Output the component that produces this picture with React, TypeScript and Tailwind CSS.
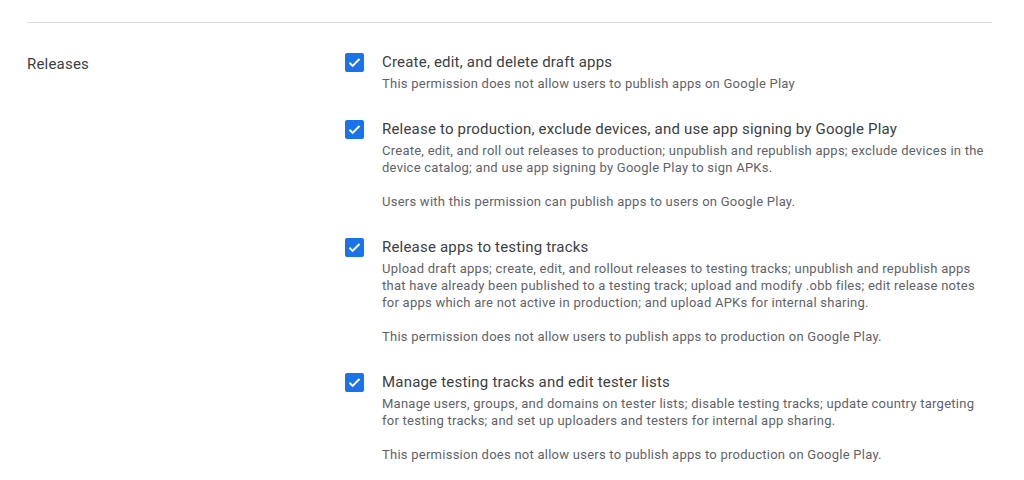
import React from "react";

const items: { title: string; paras: string[] }[] = [
  {
    title: "Create, edit, and delete draft apps",
    paras: ["This permission does not allow users to publish apps on Google Play"],
  },
  {
    title: "Release to production, exclude devices, and use app signing by Google Play",
    paras: [
      "Create, edit, and roll out releases to production; unpublish and republish apps; exclude devices in the device catalog; and use app signing by Google Play to sign APKs.",
      "Users with this permission can publish apps to users on Google Play.",
    ],
  },
  {
    title: "Release apps to testing tracks",
    paras: [
      "Upload draft apps; create, edit, and rollout releases to testing tracks; unpublish and republish apps that have already been published to a testing track; upload and modify .obb files; edit release notes for apps which are not active in production; and upload APKs for internal sharing.",
      "This permission does not allow users to publish apps to production on Google Play.",
    ],
  },
  {
    title: "Manage testing tracks and edit tester lists",
    paras: [
      "Manage users, groups, and domains on tester lists; disable testing tracks; update country targeting for testing tracks; and set up uploaders and testers for internal app sharing.",
      "This permission does not allow users to publish apps to production on Google Play.",
    ],
  },
];

function Check() {
  return (
    <div className="mt-[0.5px] flex h-[19px] w-[19px] shrink-0 items-center justify-center rounded-[2px] bg-[#1a73e8]">
      <svg width="15" height="15" viewBox="0 0 24 24" fill="none">
        <path d="M4 12.5l5 5L20 6.5" stroke="#fff" strokeWidth="3.2" />
      </svg>
    </div>
  );
}

export default function App() {
  return (
    <div
      className="h-[480px] w-[1024px] overflow-hidden bg-white pt-[22px] pl-[27px]"
      style={{ fontFamily: "Roboto, 'Noto Sans', sans-serif" }}
    >
      <div className="w-[965px] border-t border-[#dadce0]" />
      <div className="flex pt-[29px]">
        <div className="w-[318px] shrink-0 pt-[2px] text-[15px] leading-5 tracking-[0.2px] text-[#3c4043]">
          Releases
        </div>
        <div className="flex w-[647px] flex-col gap-[27px]">
          {items.map((it) => (
            <div key={it.title} className="flex">
              <Check />
              <div className="ml-[18px] flex-1">
                <div className="text-[15px] leading-5 tracking-[0.2px] text-[#3c4043]">{it.title}</div>
                <div className="mt-[3px] flex flex-col gap-[17px] text-[13px] leading-[17px] tracking-[0.25px] text-[#5f6368]">
                  {it.paras.map((p, i) => (
                    <p key={i}>{p}</p>
                  ))}
                </div>
              </div>
            </div>
          ))}
        </div>
      </div>
    </div>
  );
}
